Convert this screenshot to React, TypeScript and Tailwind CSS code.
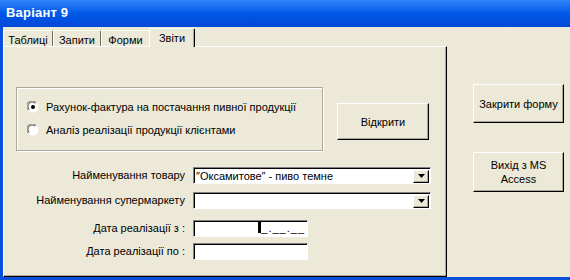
import React from 'react';

const Radio: React.FC<{ checked?: boolean }> = ({ checked }) => (
    <svg width="12" height="12" viewBox="0 0 12 12" className="shrink-0">
        <circle cx="6" cy="6" r="5.5" fill="#ffffff" />
        <path d="M1.2 9.2 A5.2 5.2 0 0 1 9.2 1.2" stroke="#808080" strokeWidth="1" fill="none" />
        <path d="M2.2 8.4 A4.2 4.2 0 0 1 8.4 2.2" stroke="#404040" strokeWidth="1" fill="none" />
        {checked && <circle cx="6" cy="6" r="2" fill="#000000" />}
    </svg>
);

const Tab: React.FC<{ label: string; width: string; active?: boolean }> = ({ label, width, active }) => (
    <div
        className={
            active
                ? `${width} h-[19px] -mb-[1px] -ml-[1px] z-10 bg-[#ece9d8] border-l border-t border-white border-r border-r-[#000] rounded-t-[2px] shadow-[inset_-1px_0_0_#aca899] flex items-start justify-center pt-[1px]`
                : `${width} h-[16px] bg-[#ece9d8] border-l border-t border-white border-r border-r-[#716f64] rounded-t-[2px] flex items-start justify-center pt-[1px]`
        }
    >
        {label}
    </div>
);

const Button: React.FC<{ className: string; children: React.ReactNode }> = ({ className, children }) => (
    <button
        type="button"
        className={`${className} bg-[#ece9d8] border-l border-t border-white border-r border-b border-r-[#000] border-b-[#000] shadow-[inset_-1px_-1px_0_#aca899] flex items-center justify-center text-center leading-[14px]`}
    >
        {children}
    </button>
);

const Field: React.FC<{ width: string; children?: React.ReactNode }> = ({ width, children }) => (
    <div className={`${width} h-[17px] bg-white border-l border-t border-[#808080] border-r border-b border-r-white border-b-white shadow-[inset_1px_1px_0_#000] flex items-center`}>
        {children}
    </div>
);

const Combo: React.FC<{ value?: string }> = ({ value }) => (
    <Field width="w-[238px]">
        <span className="flex-1 pl-[2px] pt-[1px] whitespace-nowrap">{value}</span>
        <div className="w-[16px] h-[13px] mr-[1px] mt-[1px] bg-[#ece9d8] border-l border-t border-white border-r border-b border-r-[#000] border-b-[#000] shadow-[inset_-1px_-1px_0_#aca899] flex items-center justify-center">
            <svg width="7" height="4" viewBox="0 0 7 4">
                <path d="M0 0H7L3.5 4Z" fill="#000" />
            </svg>
        </div>
    </Field>
);

const Row: React.FC<{ label: string; className: string; children: React.ReactNode }> = ({ label, className, children }) => (
    <div className={`${className} flex items-center`}>
        <div className="w-[189px] text-right pr-[8px] whitespace-nowrap">{label}</div>
        {children}
    </div>
);

export default function App() {
    return (
        <div className="w-[570px] h-[280px] flex flex-col bg-[#0a4fdc] text-black text-[11px] font-['Liberation_Sans',Arial,sans-serif] overflow-hidden">
            <div className="h-[27px] shrink-0 bg-gradient-to-b from-[#2f85fa] via-[#0058e8] to-[#0348d8] flex items-center pl-[6px] pb-[1px]">
                <span className="text-white font-bold text-[13px] tracking-[0.2px]">Варіант 9</span>
            </div>
            <div className="flex-1 flex ml-[3px] mb-[3px] bg-[#ece9d8]">
                <div className="w-[444px] flex flex-col pt-[1px]">
                    <div className="h-[18px] flex items-end">
                        <Tab label="Таблиці" width="w-[50px]" />
                        <Tab label="Запити" width="w-[48px]" />
                        <Tab label="Форми" width="w-[49px]" />
                        <Tab label="Звіти" width="w-[46px]" active />
                    </div>
                    <div className="flex-1 border-l border-t border-white border-r border-b border-r-[#000] border-b-[#000] shadow-[inset_-1px_-1px_0_#aca899] pl-[12px] pt-[40px] flex flex-col">
                        <div className="flex items-start">
                            <div className="w-[307px] h-[64px] border border-[#aca899] shadow-[inset_1px_1px_0_#fff,1px_1px_0_#fff] pl-[10px] pt-[11px] flex flex-col gap-[7px]">
                                <div className="h-[16px] flex items-center gap-[7px]">
                                    <Radio checked />
                                    <span>Рахунок-фактура на постачання пивної продукції</span>
                                </div>
                                <div className="h-[16px] flex items-center gap-[7px]">
                                    <Radio />
                                    <span>Аналіз реалізації продукції клієнтами</span>
                                </div>
                            </div>
                            <Button className="w-[92px] h-[37px] ml-[14px] mt-[16px]">Відкрити</Button>
                        </div>
                        <div className="-ml-[12px] flex flex-col">
                            <Row label="Найменування товару" className="mt-[16px]">
                                <Combo value="″Оксамитове″ - пиво темне" />
                            </Row>
                            <Row label="Найменування супермаркету" className="mt-[8px]">
                                <Combo />
                            </Row>
                            <Row label="Дата реалізації з :" className="mt-[11px]">
                                <Field width="w-[115px]">
                                    <div className="flex-1 flex justify-end items-end pr-[2px] h-full pb-[2px]">
                                        <span className="w-[3px] h-[11px] bg-black mb-[1px]" />
                                        <span className="text-[11px] leading-[11px] tracking-[1px]">_.__.__</span>
                                    </div>
                                </Field>
                            </Row>
                            <Row label="Дата реалізації по :" className="mt-[6px]">
                                <Field width="w-[115px]" />
                            </Row>
                        </div>
                    </div>
                </div>
                <div className="flex-1 flex flex-col pl-[26px] pt-[57px]">
                    <Button className="w-[91px] h-[39px]">Закрити форму</Button>
                    <Button className="w-[91px] h-[40px] mt-[29px]">Вихід з MS<br />Access</Button>
                </div>
            </div>
        </div>
    );
}
